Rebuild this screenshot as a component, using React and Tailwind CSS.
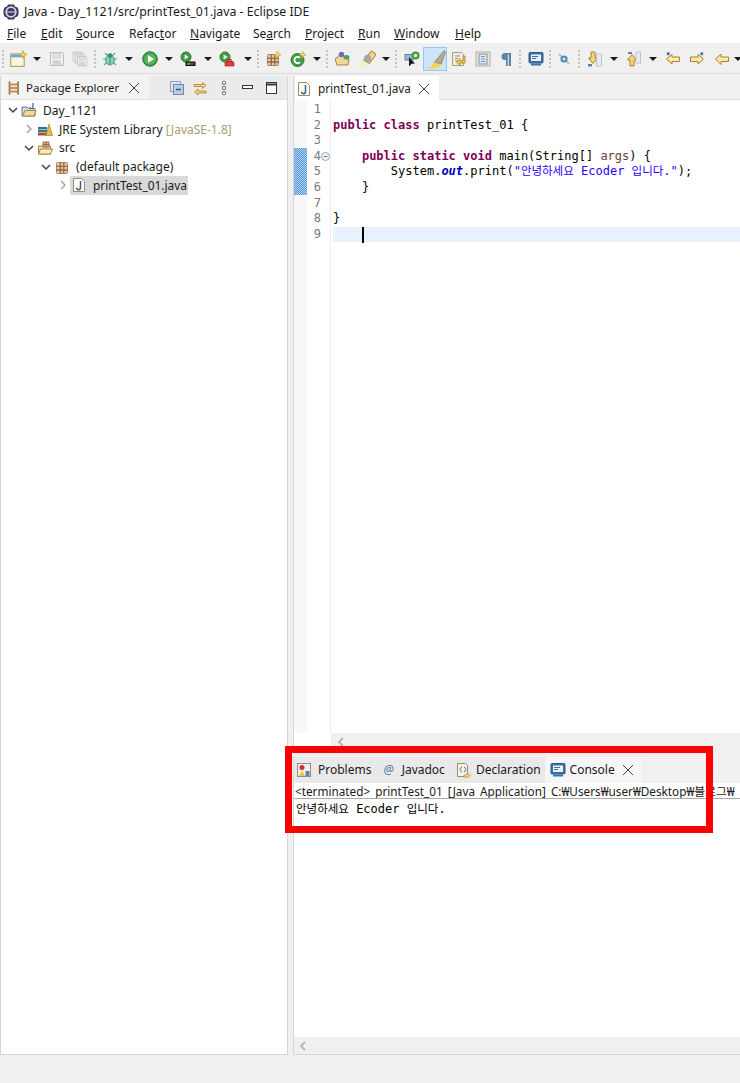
import React from "react";

const Svg = ({ children, s = 16, className = "" }) => (
  <svg width={s} height={s} viewBox="0 0 16 16" className={"shrink-0 " + className} fill="none">{children}</svg>
);

const Star = ({ x = 12, y = 4 }) => (
  <path transform={`translate(${x} ${y})`} d="M0-3.5 1-1 3.5 0 1 1 0 3.5-1 1-3.5 0-1-1Z" fill="#f7d774" stroke="#c9a13b" strokeWidth=".7" />
);
const Caret = () => <svg width="8" height="4" viewBox="0 0 8 4" className="shrink-0"><path d="M0 0h8L4 4Z" fill="#1a1a1a" /></svg>;
const Sep = () => (
  <svg width="2" height="20" viewBox="0 0 2 20" className="shrink-0">
    {[1, 5, 9, 13, 17].map((y) => <rect key={y} x="0" y={y} width="2" height="2" fill="#c4c4c0" />)}
  </svg>
);
const NewIcon = () => <Svg s={18}><rect x="1.5" y="3.5" width="12" height="11" fill="#fdf6df" stroke="#b59a62" /><rect x="2" y="4" width="11" height="2.5" fill="#6ba4dc" /><Star x={12.5} y={4} /></Svg>;
const Floppy = ({ x = 0, s = 1 }) => (
  <g transform={`translate(${x} ${x}) scale(${s})`}>
    <path d="M1.5 1.5h12l1 1v12h-13Z" fill="#efefef" stroke="#bdbdbd" />
    <rect x="4" y="2" width="7.5" height="5" fill="#e2e2e2" stroke="#c6c6c6" strokeWidth=".7" />
    <rect x="4.5" y="10" width="6.5" height="4.5" fill="#d6d6d6" stroke="#bdbdbd" strokeWidth=".7" />
  </g>
);
const SaveIcon = () => <Svg><Floppy /></Svg>;
const SaveAll = () => <Svg><Floppy x={0} s={.72} /><Floppy x={2.2} s={.72} /><Floppy x={4.4} s={.72} /></Svg>;
const Bug = () => (
  <Svg>
    <path d="M3 2l3 3M13 2l-3 3M1 8h3M12 8h3M2 14l3-3M14 14l-3-3" stroke="#5d9f8d" strokeWidth="1.1" />
    <ellipse cx="8" cy="9" rx="4.3" ry="5" fill="#8ad0bd" stroke="#4b9481" />
    <circle cx="8" cy="4.5" r="2.3" fill="#2d8f6e" />
    <path d="M8 5v8" stroke="#2d8f6e" />
  </Svg>
);
const Run = ({ s = 16 }) => (
  <Svg s={s}>
    <circle cx="8" cy="8" r="7.3" fill="#3f9e42" stroke="#2e7d32" />
    <circle cx="8" cy="8" r="5.6" fill="#5bb55e" />
    <path d="M6 4.2 12 8l-6 3.8Z" fill="#fff" />
  </Svg>
);
const MiniRun = () => <g><circle cx="6" cy="6" r="5" fill="#3f9e42" stroke="#2e7d32" /><path d="M4.6 3.4 8.6 6l-4 2.6Z" fill="#fff" /></g>;
const Coverage = () => <Svg><MiniRun /><rect x="5.5" y="10.5" width="10" height="4.5" fill="#111" /><rect x="6.8" y="11.8" width="4" height="2" fill="#32c832" /><rect x="10.8" y="11.8" width="3.2" height="2" fill="#e02020" /></Svg>;
const External = () => <Svg><MiniRun /><path d="M6 11.5 8 10h5l2 1.500V15H6Z" fill="#e23a3a" stroke="#b71c1c" strokeWidth=".7" /><rect x="9" y="8.500" width="3" height="2" fill="none" stroke="#b71c1c" /></Svg>;
const Pkg = ({ star = true }) => (
  <Svg>
    <rect x="2.500" y="3.500" width="11" height="11" rx="1" fill="#e6c9a8" stroke="#b08762" />
    <path d="M6.300 3.500v11M9.800 3.500v11M2.500 7.300h11M2.500 11h11" stroke="#96683f" strokeWidth="1.300" />
    {star && <Star x={12.500} y={3.700} />}
  </Svg>
);
const ClassIcon = () => (
  <Svg>
    <circle cx="7.500" cy="9" r="6.500" fill="#3f9e42" stroke="#2e7d32" />
    <path d="M10 6.800A3.200 3.200 0 1 0 10 11.200" stroke="#fff" strokeWidth="1.800" />
    <Star x={12.800} y={3.800} />
  </Svg>
);
const OpenIcon = () => (
  <Svg>
    <path d="M1 8 6 4h2l7 4-1 6H3Z" fill="#f1d59b" stroke="#a9833f" />
    <circle cx="7.500" cy="3.500" r="2.700" fill="#7a68b8" />
    <ellipse cx="12.500" cy="6.200" rx="3" ry="2.300" fill="#4f9f66" />
  </Svg>
);
const Torch = () => (
  <Svg s={18}>
    <path d="M5 9 12 1l4 3-6 8Z" fill="#f4d892" stroke="#b79247" />
    <circle cx="8.500" cy="7.500" r="3.200" fill="#a5a5a5" />
    <path d="M4.500 10 8 12.500 2 17 .5 15.500Z" fill="#fbeeb8" />
  </Svg>
);
const Target = () => (
  <Svg>
    <rect x="1" y="3.500" width="8" height="5.500" fill="#9cb3d1" stroke="#6a7f9e" />
    <circle cx="11.500" cy="4.500" r="4" fill="#3f9e42" />
    <circle cx="11.500" cy="4.500" r="1.800" fill="#d8f0d8" />
    <path d="M5 6v9.500l2.800-2.700 3.200-.3Z" fill="#1c1c1c" />
  </Svg>
);
const Brush = () => (
  <svg width="22" height="22" viewBox="0 0 16 16" className="shrink-0" fill="none">
    <path d="M7.500 10.500 14 2.500c.5-.7 1.600-.4 1.600.6l-3 8.500Z" fill="#b1a98c" stroke="#8f8870" strokeWidth=".6" />
    <path d="M7 10.500 12.500 12c-1 2.500-5 3.500-10.500 2.500 2.500-.5 4-1.500 5-4Z" fill="#f0d54f" />
  </svg>
);
const NextAnn = () => (
  <Svg>
    <path d="M1.500 1.500h9l2 2v11h-11Z" fill="#f2ecd9" stroke="#a99f84" />
    <path d="M4 5h5M4 7.500h3M4 10h3" stroke="#7b93b8" />
    <path d="M12 5v5H9V7.500L5.500 11 9 14.500V12h5V5Z" fill="#f2c554" stroke="#a8802a" strokeWidth=".8" />
  </Svg>
);
const Block = () => (
  <Svg>
    <rect x="1" y="1" width="14" height="14" fill="#ece7d6" stroke="#b5ad95" />
    <rect x="4" y="3" width="8" height="10" fill="#dfe7f2" stroke="#7d92b0" />
    <path d="M6 5.500h4M6 8h4M6 10.500h4" stroke="#7d92b0" />
  </Svg>
);
const Pilcrow = () => <Svg><path d="M13 2H7a3.500 3.500 0 0 0 0 7h1v6h1.800V3.500h1V15H13V2Z" fill="#5b84ad" /></Svg>;
const Monitor = ({ s = 16 }) => (
  <Svg s={s}>
    <rect x="1" y="1.500" width="14" height="10.500" rx="1" fill="#3d74a8" stroke="#2c5a88" />
    <rect x="3" y="3.500" width="10" height="6.500" fill="#e8f0f7" />
    <path d="M4 5.500h6M4 7.500h4" stroke="#3d74a8" />
    <path d="M3 12.500h10v2H3Z" fill="#3d74a8" />
  </Svg>
);
const Glasses = () => (
  <Svg>
    <path d="M3 3l10 10" stroke="#aab2b8" strokeWidth="1.400" />
    <circle cx="8" cy="8" r="3.600" fill="#4d8bb3" />
    <circle cx="8" cy="8" r="1.500" fill="#cfe3f0" />
  </Svg>
);
const ArrowDown = () => (
  <Svg>
    <path d="M5 1h4v6h2.500L7 12.500 2.500 7H5Z" fill="#f6d57c" stroke="#ad8222" />
    <rect x="10.500" y="3" width="5" height="12" fill="#e8ecf2" stroke="#a8b5c6" strokeWidth=".7" />
    <rect x="2" y="13" width="4" height="2.500" fill="#5b84ad" />
  </Svg>
);
const ArrowUp = () => (
  <Svg>
    <path d="M5 15V9H2.500L7 3.500 11.500 9H9v6Z" fill="#f6d57c" stroke="#ad8222" />
    <rect x="11" y="1" width="4.500" height="11" fill="#e8ecf2" stroke="#a8b5c6" strokeWidth=".7" />
    <rect x="3" y="1" width="4" height="2" fill="#5b84ad" />
  </Svg>
);
const BackEdit = () => (
  <Svg>
    <path d="M1.500 8 7 3.500V6h7.500v4.500H7V13Z" fill="#fbe6ac" stroke="#ad8222" />
    <path d="M2 1.500l2.500 2.500M4.500 1.500 2 4" stroke="#2f6ea5" strokeWidth="1.100" />
  </Svg>
);
const FwdEdit = () => (
  <Svg>
    <path d="M14.500 8 9 3.500V6H1.500v4.500H9V13Z" fill="#fbe6ac" stroke="#ad8222" />
    <path d="M11.500 1.500 14 4M14 1.500 11.500 4" stroke="#2f6ea5" strokeWidth="1.100" />
  </Svg>
);
const Back = () => <Svg><path d="M1.500 8 7 3v3h7.500v4.500H7V13.500Z" fill="#fbe6ac" stroke="#ad8222" /></Svg>;

const Tool = ({ ml, children }) => <div className={"flex items-center justify-center shrink-0 " + ml}>{children}</div>;

const JFile = () => (
  <Svg>
    <path d="M2.500 1.500h8l3 3v10h-11Z" fill="#fbfbf6" stroke="#9a8f6d" />
    <path d="M9.500 4v6.500a2 2 0 0 1-4 .3" stroke="#35608f" strokeWidth="1.500" />
  </Svg>
);
const Close = () => <svg width="12" height="12" viewBox="0 0 12 12" className="shrink-0"><path d="M1 1l10 10M11 1 1 11" stroke="#444" strokeWidth="1" /></svg>;
const Chevron = ({ open, dark }) => (
  <svg width="10" height="10" viewBox="0 0 10 10" className="shrink-0">
    {open
      ? <path d="M1 3l4 4 4-4" stroke="#444" strokeWidth="1.500" fill="none" />
      : <path d="M3 1l4 4-4 4" stroke={dark ? "#444" : "#a8a8a8"} strokeWidth="1.500" fill="none" />}
  </svg>
);
const ScrollLeft = () => (
  <svg width="10" height="10" viewBox="0 0 10 10" className="shrink-0">
    <path d="M7 1 3 5l4 4" stroke="#b4b4b4" strokeWidth="1.800" fill="none" />
  </svg>
);
const ProjectIcon = () => (
  <Svg>
    <path d="M1 5h5l1.500 1.500H14v7.500H1Z" fill="#c9d8ea" stroke="#5f7da3" />
    <path d="M1.500 14 4 8.500h11L13 14Z" fill="#f3d99a" stroke="#a9833f" />
    <path d="M12 1v4a1.500 1.500 0 0 1-3 0" stroke="#35608f" strokeWidth="1.200" />
  </Svg>
);
const LibIcon = () => (
  <Svg>
    <rect x="1" y="12" width="9" height="2.500" fill="#b8463a" />
    <rect x="1" y="9" width="9" height="2.500" fill="#3d7a5a" />
    <rect x="1" y="6" width="9" height="2.500" fill="#2f6ea5" />
    <path d="M12 3 15.500 14.500H9Z" fill="#e6b94a" stroke="#a8802a" strokeWidth=".7" />
  </Svg>
);
const SrcIcon = () => (
  <Svg>
    <path d="M1.500 6h12v8h-12Z" fill="#f0d9a7" stroke="#a9833f" />
    <path d="M1.500 14 3.500 9h12l-2 5Z" fill="#f9e9be" stroke="#a9833f" />
    <path d="M6 2h6v5H6ZM9 2v5M6 4.500h6" fill="#d9b48c" stroke="#8a5a37" strokeWidth=".8" />
  </Svg>
);

const Row = ({ pl, open, dark, icon, children, sel }) => (
  <div className={"flex items-center h-[18.75px] " + pl}>
    <Chevron open={open} dark={dark} />
    <div className={"ml-[2px] pl-[1px] pr-[1px] h-[19px] flex items-center " + (sel ? "bg-[#d9d9d9]" : "")}>
      {icon}
      <div className={"pl-[6px] leading-[19px] whitespace-nowrap " + (sel ? "text-[11.9px]" : "")}>{children}</div>
    </div>
  </div>
);

const MENU = [
  ["w-[34px]", "", "F", "ile"],
  ["w-[35px]", "", "E", "dit"],
  ["w-[53px]", "", "S", "ource"],
  ["w-[61px]", "Refac", "t", "or"],
  ["w-[63px]", "", "N", "avigate"],
  ["w-[52px]", "Se", "a", "rch"],
  ["w-[53px]", "", "P", "roject"],
  ["w-[36px]", "", "R", "un"],
  ["w-[61px]", "", "W", "indow"],
  ["w-[40px]", "", "H", "elp"],
];

const KW = ({ children }) => <span className="font-bold text-[#7f0055]">{children}</span>;
const HG = ({ children }) => <span className="text-[11.5px]">{children}</span>;

const CODE = [
  null,
  <><KW>public</KW> <KW>class</KW> printTest_01 {"{"}</>,
  null,
  <>    <KW>public</KW> <KW>static</KW> <KW>void</KW> main(String[] <span className="text-[#6a3e3e]">args</span>) {"{"}</>,
  <>        System.<span className="italic font-bold text-[#0000c0]">out</span>.print(<span className="text-[#2a00ff]">"<HG>안녕하세요</HG> Ecoder <HG>입니다</HG>."</span>);</>,
  <>    {"}"}</>,
  null,
  <>{"}"}</>,
  null,
];

export default function App() {
  const mono = "font-['DejaVu_Sans_Mono','Noto_Sans_CJK_KR',monospace] text-[12px]";
  return (
    <div className="relative w-[740px] h-[1083px] overflow-hidden bg-[#f0f0f0] text-[#1a1a1a] text-[12px] font-['Noto_Sans','Noto_Sans_CJK_KR',sans-serif]">
      {/* title */}
      <div className="h-[24px] bg-white flex items-center pl-[3px]">
        <svg width="16" height="16" viewBox="0 0 16 16" className="shrink-0">
          <path d="M5 .5h6l1 2 2.500 1 1 2.500v4l-1 2.500-2.500 1-1 2H5l-1-2-2.500-1-1-2.500V6l1-2.500 2.500-1Z" fill="#3b3560" />
          <circle cx="8" cy="8" r="4.800" fill="none" stroke="#d9d6e6" strokeWidth="1.800" />
          <circle cx="8" cy="8" r="2.200" fill="#4a4378" />
          <path d="M3.500 8h9" stroke="#d9d6e6" />
        </svg>
        <span className="ml-[5px] whitespace-nowrap text-[12.3px]">Java - Day_1121/src/printTest_01.java - Eclipse IDE</span>
      </div>
      {/* menu */}
      <div className="h-[19px] bg-white flex items-center pl-[7px]">
        {MENU.map(([w, a, u, b]) => (
          <div key={u + b} className={"shrink-0 whitespace-nowrap " + w}>{a}<span className="underline">{u}</span>{b}</div>
        ))}
      </div>
      {/* toolbar */}
      <div className="h-[31px] flex items-center pt-[1px] border-b border-[#dcdcdc]">
        <Tool ml="ml-[2px]"><Sep /></Tool>
        <Tool ml="ml-[5px]"><NewIcon /></Tool>
        <Tool ml="ml-[6px]"><Caret /></Tool>
        <Tool ml="ml-[8px]"><SaveIcon /></Tool>
        <Tool ml="ml-[7px]"><SaveAll /></Tool>
        <Tool ml="ml-[6px]"><Sep /></Tool>
        <Tool ml="ml-[6px]"><Bug /></Tool>
        <Tool ml="ml-[7px]"><Caret /></Tool>
        <Tool ml="ml-[9px]"><Run /></Tool>
        <Tool ml="ml-[7px]"><Caret /></Tool>
        <Tool ml="ml-[7px]"><Coverage /></Tool>
        <Tool ml="ml-[8px]"><Caret /></Tool>
        <Tool ml="ml-[7px]"><External /></Tool>
        <Tool ml="ml-[9px]"><Caret /></Tool>
        <Tool ml="ml-[5px]"><Sep /></Tool>
        <Tool ml="ml-[6px]"><Pkg /></Tool>
        <Tool ml="ml-[9px]"><ClassIcon /></Tool>
        <Tool ml="ml-[7px]"><Caret /></Tool>
        <Tool ml="ml-[5px]"><Sep /></Tool>
        <Tool ml="ml-[6px]"><OpenIcon /></Tool>
        <Tool ml="ml-[8px]"><Torch /></Tool>
        <Tool ml="ml-[6px]"><Caret /></Tool>
        <Tool ml="ml-[5px]"><Sep /></Tool>
        <Tool ml="ml-[7px]"><Target /></Tool>
        <Tool ml="ml-[3px]">
          <div className="w-[24px] h-[24px] flex items-center justify-center bg-[#cce4f7] border border-[#90c8f6]"><Brush /></div>
        </Tool>
        <Tool ml="ml-[4px]"><NextAnn /></Tool>
        <Tool ml="ml-[8px]"><Block /></Tool>
        <Tool ml="ml-[7px]"><Pilcrow /></Tool>
        <Tool ml="ml-[5px]"><Sep /></Tool>
        <Tool ml="ml-[7px]"><Monitor /></Tool>
        <Tool ml="ml-[5px]"><Sep /></Tool>
        <Tool ml="ml-[5px]"><Glasses /></Tool>
        <Tool ml="ml-[6px]"><Sep /></Tool>
        <Tool ml="ml-[6px]"><ArrowDown /></Tool>
        <Tool ml="ml-[8px]"><Caret /></Tool>
        <Tool ml="ml-[7px]"><ArrowUp /></Tool>
        <Tool ml="ml-[8px]"><Caret /></Tool>
        <Tool ml="ml-[8px]"><BackEdit /></Tool>
        <Tool ml="ml-[8px]"><FwdEdit /></Tool>
        <Tool ml="ml-[9px]"><Back /></Tool>
        <Tool ml="ml-[4px]"><Caret /></Tool>
      </div>
      {/* workbench */}
      <div className="flex pt-[2px] gap-[5px]">
        {/* left panel */}
        <div className="w-[288px] h-[979px] shrink-0 flex flex-col border border-t-0 border-[#d6d6d6] bg-white">
          <div className="h-[24px] shrink-0 flex items-center bg-[#ebebeb] border-b border-[#e2e2e2]">
            <div className="w-[148px] h-full shrink-0 flex items-center bg-[#f3f3f3] pl-[5px]">
              <Svg><path d="M3.500 1.500v13M12 1.500v13" stroke="#7a5a3a" strokeWidth="1.500" /><path d="M3 4.500h9M3 8h9M3 11.500h9" stroke="#c78a4a" strokeWidth="1.800" /></Svg>
              <span className="ml-[4px] whitespace-nowrap text-[11.5px]">Package Explorer</span>
              <span className="ml-[9px]"><Close /></span>
            </div>
            <div className="ml-[20px]"><Svg><rect x="1.500" y="1.500" width="10" height="10" fill="#dfe7f2" stroke="#8aa0bd" /><rect x="4.500" y="4.500" width="10" height="10" fill="#b9cde3" stroke="#6d88aa" /><path d="M7 9.500h5" stroke="#2f5a88" strokeWidth="1.500" /></Svg></div>
            <div className="ml-[7px]"><Svg><path d="M2 4.500h8.500V2.500L14 5.500l-3.500 3V6.500H2Z" fill="#f6d57c" stroke="#ad8222" strokeWidth=".8" /><path d="M14 11H6V9L2.500 12 6 15v-2h8Z" fill="#f6d57c" stroke="#ad8222" strokeWidth=".8" /></Svg></div>
            <div className="ml-[8px]"><Svg>{[3, 8, 13].map((y) => <circle key={y} cx="8" cy={y} r="1.800" fill="#e8e8e8" stroke="#777" />)}</Svg></div>
            <div className="ml-[8px]"><Svg><rect x="2.500" y="5.500" width="10" height="3" fill="#fff" stroke="#333" /></Svg></div>
            <div className="ml-[8px]"><Svg><rect x="2.500" y="2.500" width="10" height="11" fill="#fff" stroke="#333" /><path d="M2.500 4.500h10" stroke="#333" strokeWidth="2" /></Svg></div>
          </div>
          <div className="pt-[1px]">
            <Row pl="pl-[7px]" open icon={<ProjectIcon />}>Day_1121</Row>
            <Row pl="pl-[23px]" icon={<LibIcon />}>JRE System Library <span className="text-[#a89c70]">[JavaSE-1.8]</span></Row>
            <Row pl="pl-[23px]" open icon={<SrcIcon />}>src</Row>
            <Row pl="pl-[40px]" open icon={<Pkg star={false} />}>(default package)</Row>
            <Row pl="pl-[57px]" icon={<JFile />} sel>printTest_01.java</Row>
          </div>
        </div>
        {/* right column */}
        <div className="flex-1 min-w-0 flex flex-col">
          {/* editor */}
          <div className="h-[674px] shrink-0 flex flex-col border-l border-[#d6d6d6] bg-white">
            <div className="h-[24px] shrink-0 flex bg-[#f0f0f0] border-b border-[#dcdcdc]">
              <div className="ml-[1px] w-[144px] h-[25px] shrink-0 flex items-center bg-white pl-[1px]">
                <JFile />
                <span className="ml-[6px] whitespace-nowrap text-[11.75px]">printTest_01.java</span>
                <span className="ml-[7px]"><Close /></span>
              </div>
            </div>
            <div className="flex-1 flex min-h-0">
              <div className="w-[13px] shrink-0 bg-[#f8f8f8] pt-[48px]">
                <div className="h-[47px] bg-[repeating-conic-gradient(#4f95d8_0_25%,#b5d5f2_0_50%)] bg-[length:2px_2px]" />
              </div>
              <div className={"w-[24px] shrink-0 border-r border-[#ececec] pt-[2px] text-[#787878] text-right pr-[9px] leading-[15.6px] " + mono}>
                {CODE.map((_, i) => <div key={i} className="relative h-[15.6px]">{i + 1}{i === 3 && <svg width="9" height="9" viewBox="0 0 9 9" className="absolute top-[3px] right-[-9px]"><circle cx="4.500" cy="4.500" r="4" fill="#f0f4f8" stroke="#9aa5b1" /><path d="M2.500 4.500h4" stroke="#6d7a88" /></svg>}</div>)}
              </div>
              <div className={"flex-1 min-w-0 pl-[2px] pt-[2px] leading-[15.6px] text-black " + mono}>
                {CODE.map((c, i) => (
                  <div key={i} className={"relative h-[15.6px] whitespace-pre " + (i === 8 ? "bg-[#e8f2fe]" : "")}>
                    {c}
                    {i === 8 && <div className="absolute left-[29px] top-0 w-[2px] h-[16px] bg-black" />}
                  </div>
                ))}
              </div>
            </div>
            <div className="h-[17px] shrink-0 flex">
              <div className="w-[37px] shrink-0 bg-white" />
              <div className="flex-1 bg-[#f0f0f0] flex items-center pl-[5px]"><ScrollLeft /></div>
            </div>
          </div>
          {/* console */}
          <div className="mt-[6px] h-[299px] shrink-0 flex flex-col border-l border-b border-[#d6d6d6] bg-white">
            <div className="h-[27px] shrink-0 flex items-end bg-[#f0f0f0]">
              <div className="h-[26px] flex items-center shrink-0 bg-[#e9e9e9] pl-[2px] w-[347px]">
                <Svg><rect x="1.500" y="1.500" width="13" height="13" fill="#f4efe4" stroke="#8a8f9a" /><circle cx="6" cy="5.500" r="2.500" fill="#d92b2b" /><path d="M3 14l3-5 3 5Z" fill="#f2c230" /><rect x="9.500" y="9" width="4" height="5" fill="#5b84ad" /></Svg>
                <span className="ml-[6px]">Problems</span>
                <span className="ml-[12px] text-[#4a7fb0] italic">@</span>
                <span className="ml-[8px]">Javadoc</span>
                <span className="ml-[10px] flex items-center"><Svg><path d="M2.500 1.500h8l2 2v11h-10Z" fill="#f7f2e2" stroke="#9a8f6d" /><path d="M7 5c-1.500 0-1 2-2 2.500 1 .5.500 2.500 2 2.500M9 5c1.500 0 1 2 2 2.500-1 .5-.5 2.500-2 2.500" stroke="#35608f" strokeWidth=".9" /><path d="M9 13h3v-2l3.500 2.500L12 16v-1H9Z" fill="#f6d57c" stroke="#ad8222" strokeWidth=".6" /></Svg></span>
                <span className="ml-[5px]">Declaration</span>
                <div className="ml-[4px] h-full flex-1 flex items-center bg-[#f6f6f6] pl-[5px]">
                  <Monitor />
                  <span className="ml-[4px]">Console</span>
                  <span className="ml-[7px]"><Close /></span>
                </div>
              </div>
            </div>
            <div className="h-[16px] shrink-0 flex items-center border-b border-[#a9a9a9] pl-[1px] whitespace-nowrap overflow-hidden leading-[16px] bg-white [word-spacing:2px] text-[11.75px]">
              {"<terminated> printTest_01 [Java Application] C:₩Users₩user₩Desktop₩블로그₩"}
            </div>
            <div className={"flex-1 min-h-0 pl-[2px] pt-[2px] leading-[16px] text-black " + mono}>
              <HG>안녕하세요</HG> Ecoder <HG>입니다</HG>.
            </div>
            <div className="h-[17px] shrink-0 bg-[#f0f0f0] flex items-center pl-[4px]"><ScrollLeft /></div>
          </div>
        </div>
      </div>
      {/* red annotation */}
      <div className="absolute left-[285px] top-[746px] w-[428px] h-[87px] border-[7px] border-[#ff0000]" />
    </div>
  );
}
